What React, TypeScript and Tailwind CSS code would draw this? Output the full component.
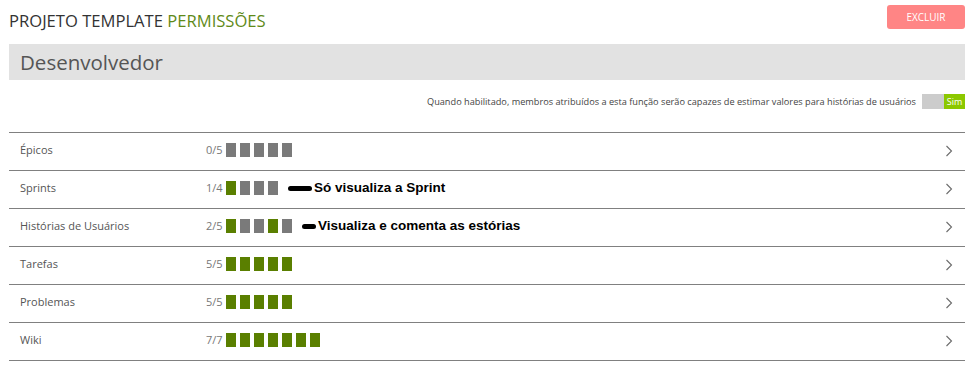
import React from "react";

type Row = { label: string; on: boolean[]; note?: string; pill?: number };

const rows: Row[] = [
  { label: "Épicos", on: [false, false, false, false, false] },
  { label: "Sprints", on: [true, false, false, false], note: "Só visualiza a Sprint", pill: 24 },
  { label: "Histórias de Usuários", on: [true, false, false, true, false], note: "Visualiza e comenta as estórias", pill: 14 },
  { label: "Tarefas", on: [true, true, true, true, true] },
  { label: "Problemas", on: [true, true, true, true, true] },
  { label: "Wiki", on: [true, true, true, true, true, true, true] },
];

function Chevron() {
  return (
    <svg width="8" height="12" viewBox="0 0 8 12" className="block">
      <path d="M1.5 1 L6.5 6 L1.5 11" fill="none" stroke="#6b6b6b" strokeWidth="1.1" />
    </svg>
  );
}

export default function App() {
  return (
    <div
      className="w-[979px] h-[377px] bg-white overflow-hidden pl-[9px] pr-[14px] pt-[5px]"
      style={{ fontFamily: '"Open Sans", "Noto Sans", sans-serif' }}
    >
      <div className="flex justify-between items-start h-[24px]">
        <div className="mt-[7px] text-[16.6px] leading-[18px] text-[#333]">
          PROJETO TEMPLATE <span className="text-[#5f8a18]">PERMISSÕES</span>
        </div>
        <button className="w-[78px] h-[24px] rounded-[3px] bg-[#ff8585] text-white text-[10px] leading-[24px] text-center">
          EXCLUIR
        </button>
      </div>

      <div className="mt-[15px] h-[36px] bg-[#e2e2e2] flex items-center pl-[11px]">
        <span className="text-[20.5px] leading-[24px] text-[#555]">Desenvolvedor</span>
      </div>

      <div className="mt-[14px] h-[15px] flex justify-end items-center">
        <span className="text-[9.2px] text-[#444] mr-[6px] leading-[15px]">
          Quando habilitado, membros atribuídos a esta função serão capazes de estimar valores para histórias de usuários
        </span>
        <div className="flex h-[15px]">
          <div className="w-[22px] h-[15px] bg-[#cccccc]" />
          <div className="w-[21px] h-[15px] bg-[#8cc800] text-white text-[9px] leading-[15px] text-center">Sim</div>
        </div>
      </div>

      <div className="mt-[23px] border-t border-[#808080]">
        {rows.map((r) => (
          <div key={r.label} className="h-[38px] border-b border-[#808080] flex items-center pl-[11px] pr-[12px] pb-[3px]">
            <div className="w-[186px] text-[11px] text-[#555]">{r.label}</div>
            <div className="w-[20px] text-[11px] text-[#777]">
              {r.on.filter(Boolean).length}/{r.on.length}
            </div>
            <div className="flex gap-[4px]">
              {r.on.map((o, i) => (
                <div key={i} className={o ? "w-[10px] h-[14px] bg-[#5a7f00]" : "w-[10px] h-[14px] bg-[#7a7a7a]"} />
              ))}
            </div>
            {r.note && (
              <div className="flex items-center ml-[10px] mt-[1px]">
                <div className={r.pill === 24 ? "w-[24px] h-[5px] rounded-full bg-black" : "w-[14px] h-[5px] rounded-full bg-black"} />
                <span
                  className="ml-[2px] text-[13.5px] font-bold text-black"
                  style={{ fontFamily: '"Liberation Sans", Arial, sans-serif' }}
                >
                  {r.note}
                </span>
              </div>
            )}
            <div className="ml-auto mt-[2px]">
              <Chevron />
            </div>
          </div>
        ))}
      </div>
    </div>
  );
}
